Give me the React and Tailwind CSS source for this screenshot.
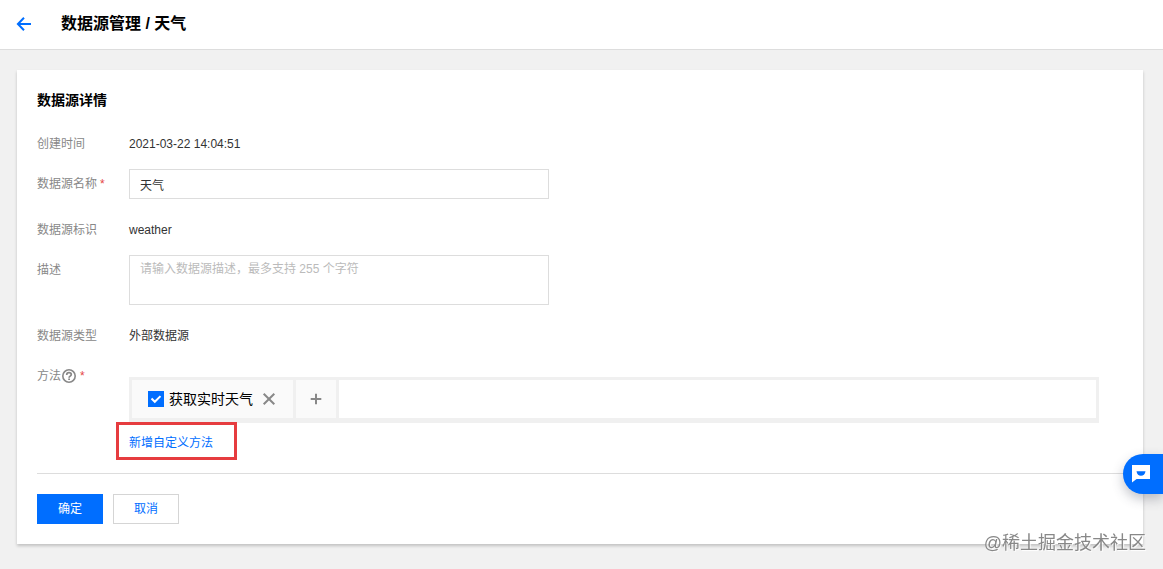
import React, { useState } from 'react';

function Row({ label, htmlFor, required, help, text, children }) {
  const Label = htmlFor ? 'label' : 'div';
  return (
    <div className="flex items-start">
      <Label
        htmlFor={htmlFor}
        className={`flex w-[92px] shrink-0 items-center text-[#888888] ${text ? 'pt-1.5 leading-5' : 'leading-[30px]'}`}
      >
        {label}
        {help && <HelpIcon />}
        {required && <span className="ml-[3px] text-[#e54545]">*</span>}
      </Label>
      <div className={`min-w-0 flex-1 ${text ? 'pt-1.5 leading-5' : ''}`}>{children}</div>
    </div>
  );
}

function HelpIcon() {
  return (
    <svg className="size-4" viewBox="0 0 16 16" fill="none" stroke="#888888" aria-hidden="true">
      <circle cx="8" cy="8" r="6.2" strokeWidth="1.6" />
      <path d="M5.7 6.9c0-1.500 1-2.300 2.300-2.300s2.300.8 2.300 2c0 1.500-2.200 1.600-2.200 3.100" strokeWidth="1.7" />
      <path d="M8.100 10.600v1.500" strokeWidth="1.8" />
    </svg>
  );
}

function BackIcon() {
  return (
    <svg className="size-4" viewBox="0 0 16 16" fill="none" stroke="#006eff" strokeWidth="2" aria-hidden="true">
      <path d="M8 1.7 1.9 8 8 14.3M2 8h13" />
    </svg>
  );
}

function CloseIcon() {
  return (
    <svg className="size-4" viewBox="0 0 16 16" fill="none" stroke="#888888" strokeWidth="2" aria-hidden="true">
      <path d="m2.700 2.700 10.600 10.600m0-10.600-10.600 10.600" />
    </svg>
  );
}

function PlusIcon() {
  return (
    <svg className="size-4" viewBox="0 0 16 16" fill="none" stroke="#888888" strokeWidth="2" aria-hidden="true">
      <path d="M8 2.700v10.600M2.700 8h10.600" />
    </svg>
  );
}

function ChatIcon() {
  return (
    <svg className="size-[18px]" viewBox="0 0 18 18" aria-hidden="true">
      <path d="M0 0h18v14H4.6L0 17.5Z" fill="#ffffff" />
      <path d="M4.5 6.2h9c-.4 2.900-2.200 4.600-4.500 4.600s-4.100-1.700-4.500-4.600Z" fill="#006eff" />
    </svg>
  );
}

export default function App() {
  const [name, setName] = useState('天气');
  const [description, setDescription] = useState('');
  const [enabled, setEnabled] = useState(true);

  return (
    <div className="min-h-screen bg-[#f1f1f1] font-['Liberation_Sans','Noto_Sans_CJK_SC',sans-serif] text-xs text-[#333333]">
      <header className="flex h-[50px] items-center border-b border-[#dddddd] bg-white pb-px pl-4">
        <button type="button" aria-label="返回" className="flex">
          <BackIcon />
        </button>
        <h1 className="ml-[29px] pb-px text-base font-bold text-black">数据源管理 / 天气</h1>
      </header>

      <main className="pt-5 pr-5 pb-5 pl-[17px]">
        <section className="bg-white p-5 shadow-[0_2px_3px_rgba(0,0,0,0.2)]">
          <h2 className="text-sm font-bold text-black">数据源详情</h2>

          <form onSubmit={(event) => event.preventDefault()}>
            <div className="mt-[18px] flex flex-col gap-[15px]">
              <Row label="创建时间" text>2021-03-22 14:04:51</Row>

              <Row label="数据源名称" htmlFor="source-name" required>
                <input
                  id="source-name"
                  type="text"
                  value={name}
                  onChange={(event) => setName(event.target.value)}
                  className="block h-[30px] w-full max-w-[420px] border border-[#dddddd] px-2.5 outline-none focus:border-[#006eff]"
                />
              </Row>

              <Row label="数据源标识" text>weather</Row>

              <Row label="描述" htmlFor="source-description">
                <textarea
                  id="source-description"
                  value={description}
                  onChange={(event) => setDescription(event.target.value)}
                  placeholder="请输入数据源描述，最多支持 255 个字符"
                  className="block h-[50px] w-full max-w-[420px] resize-none border border-[#dddddd] px-2.5 py-[3px] leading-5 outline-none placeholder:text-[#bbbbbb] focus:border-[#006eff]"
                />
              </Row>

              <Row label="数据源类型" text>外部数据源</Row>

              <Row label="方法" help required>
                <div className="mt-4 mr-6 flex h-[46px] border-[3px] border-b-[5px] border-[#f0f0f0]">
                  <div className="flex items-center border-r-[3px] border-[#f0f0f0] bg-[#fafafa] px-4">
                    <label className="flex items-center gap-[5px] text-sm text-black">
                      <span className="relative flex size-4">
                        <input
                          type="checkbox"
                          checked={enabled}
                          onChange={(event) => setEnabled(event.target.checked)}
                          className="size-4 appearance-none border border-[#006eff] bg-white checked:bg-[#006eff]"
                        />
                        {enabled && (
                          <svg
                            className="pointer-events-none absolute inset-0 size-4"
                            viewBox="0 0 16 16"
                            fill="none"
                            stroke="#ffffff"
                            strokeWidth="2"
                            aria-hidden="true"
                          >
                            <path d="m3.500 7.500 3.300 3.300 5.700-5.700" />
                          </svg>
                        )}
                      </span>
                      获取实时天气
                    </label>
                    <button type="button" aria-label="删除方法" className="ml-2 flex">
                      <CloseIcon />
                    </button>
                  </div>
                  <button
                    type="button"
                    aria-label="添加方法"
                    className="flex w-[43px] items-center justify-center border-r-[3px] border-[#f0f0f0] bg-[#fafafa]"
                  >
                    <PlusIcon />
                  </button>
                </div>
                <div className="mt-2.5 flex">
                  <a href="#add-method" className="relative leading-5 text-[#006eff]">
                    新增自定义方法
                    <span className="pointer-events-none absolute -top-[11px] -right-6 -bottom-[7px] -left-[13px] border-[3px] border-[#e63c3f]" />
                  </a>
                </div>
              </Row>
            </div>

            <div className="mt-5 flex gap-2.5 border-t border-[#dddddd] pt-5">
              <button type="submit" className="h-[30px] w-[66px] border border-[#006eff] bg-[#006eff] text-white">
                确定
              </button>
              <button type="button" className="h-[30px] w-[66px] border border-[#d5d5d5] bg-white text-[#006eff]">
                取消
              </button>
            </div>
          </form>
        </section>
      </main>

      <button
        type="button"
        aria-label="在线咨询"
        className="fixed right-0 bottom-[75px] flex h-10 w-10 items-center rounded-l-full bg-[#006eff] pl-[9px] shadow-[0_5px_12px_rgba(54,58,80,0.3)]"
      >
        <ChatIcon />
      </button>
      <div className="pointer-events-none fixed right-[17px] bottom-3 text-lg text-[#888888] [text-shadow:1px_1px_1px_#ffffff]">
        @稀土掘金技术社区
      </div>
    </div>
  );
}
